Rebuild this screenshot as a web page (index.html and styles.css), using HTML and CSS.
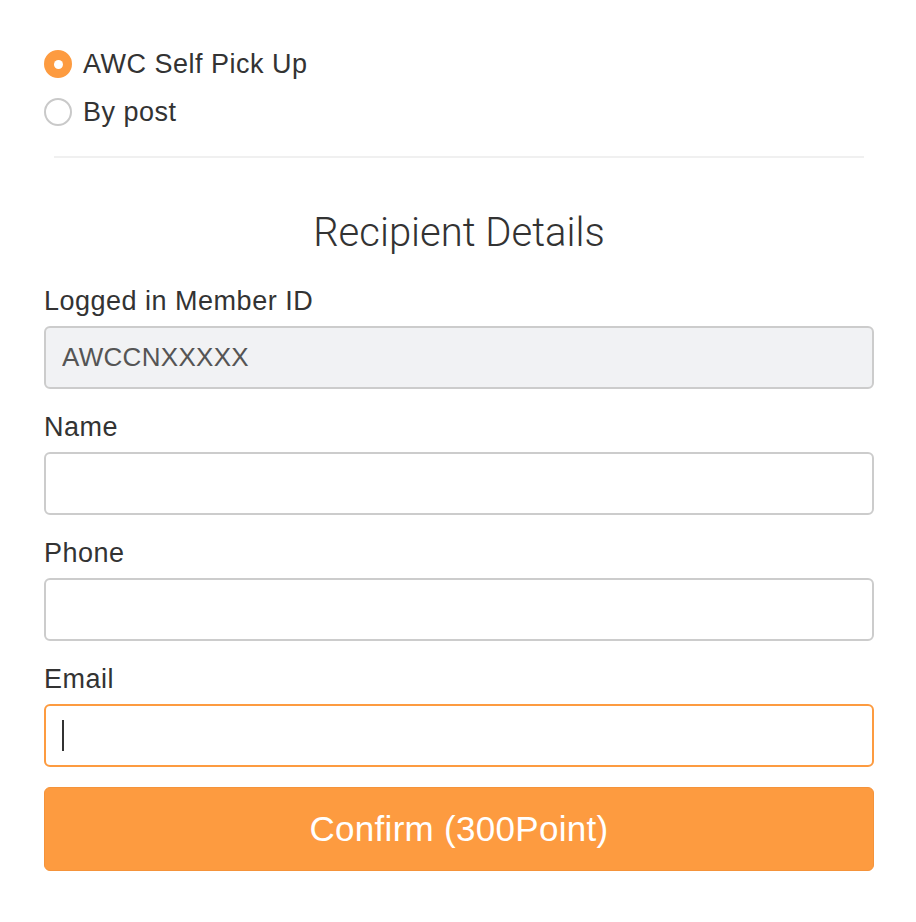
FILE: index.html
```html
<!DOCTYPE html>
<html lang="en">
<head>
  <meta charset="UTF-8" />
  <meta name="viewport" content="width=device-width, initial-scale=1.0"/>
  <title>Recipient Details</title>
  <link rel="stylesheet" href="styles.css">
</head>
<body>
  <div class="page">
    <div class="delivery">
      <label class="radio-row">
        <span class="radio checked"></span>
        <span class="radio-text">AWC Self Pick Up</span>
      </label>
      <label class="radio-row">
        <span class="radio"></span>
        <span class="radio-text">By post</span>
      </label>
    </div>

    <div class="divider"></div>

    <h2 class="title">Recipient Details</h2>

    <div class="field">
      <label class="field-label">Logged in Member ID</label>
      <input class="input readonly" type="text" value="AWCCNXXXXX" readonly>
    </div>

    <div class="field">
      <label class="field-label">Name</label>
      <input class="input" type="text">
    </div>

    <div class="field">
      <label class="field-label">Phone</label>
      <input class="input" type="text">
    </div>

    <div class="field">
      <label class="field-label">Email</label>
      <div class="input-wrap">
        <input class="input focused" type="email">
        <span class="caret"></span>
      </div>
    </div>

    <button class="confirm">Confirm (300Point)</button>
  </div>
</body>
</html>
```

FILE: styles.css
```css
body {
  margin: 0;
  background: #fff;
  font-family: "Liberation Sans", Arial, sans-serif;
  color: #333;
}
.page {
  width: 830px;
  padding: 40px 0 40px 44px;
}
.delivery {
  display: flex;
  flex-direction: column;
}
.radio-row {
  display: flex;
  align-items: center;
  height: 48px;
  gap: 11px;
}
.radio {
  width: 28px;
  height: 28px;
  box-sizing: border-box;
  border-radius: 50%;
  border: 2px solid #c9c9c9;
  background: #fff;
  display: flex;
  align-items: center;
  justify-content: center;
}
.radio.checked {
  border-color: #fd9b40;
  background: #fd9b40;
}
.radio.checked::after {
  content: "";
  width: 9px;
  height: 9px;
  border-radius: 50%;
  background: #fff;
}
.radio-text {
  font-size: 27px;
  letter-spacing: 0.5px;
  line-height: 48px;
  color: #333;
}
.divider {
  height: 2px;
  background: #f0f0f0;
  margin: 20px 10px 0 10px;
}
.title {
  font-family: Roboto, "Liberation Sans", sans-serif;
  font-weight: 300;
  font-size: 40px;
  line-height: 43px;
  text-align: center;
  color: #333;
  margin: 53px 0 29px 0;
}
.field {
  display: flex;
  flex-direction: column;
  margin-bottom: 20px;
}
.field-label {
  font-size: 27px;
  letter-spacing: 0.5px;
  line-height: 36px;
  margin-bottom: 7px;
  color: #333;
}
.input {
  box-sizing: border-box;
  width: 830px;
  height: 63px;
  padding: 0 16px;
  border: 2px solid #cccccc;
  border-radius: 6px;
  background: #fff;
  font-family: "Liberation Sans", Arial, sans-serif;
  font-size: 26px;
  letter-spacing: 0.3px;
  color: #555;
  outline: none;
}
.input.readonly {
  background: #f1f2f4;
}
.input.focused {
  border-color: #fd9b40;
}
.input-wrap {
  position: relative;
}
.caret {
  position: absolute;
  left: 18px;
  top: 16px;
  width: 2px;
  height: 31px;
  background: #333;
}
.confirm {
  display: block;
  box-sizing: border-box;
  width: 830px;
  height: 84px;
  margin-top: 2px;
  border: 1px solid #f5933a;
  border-radius: 6px;
  background: #fd9b40;
  color: #fff;
  font-family: "Liberation Sans", Arial, sans-serif;
  font-size: 35px;
  letter-spacing: 0.3px;
  cursor: pointer;
}
```
